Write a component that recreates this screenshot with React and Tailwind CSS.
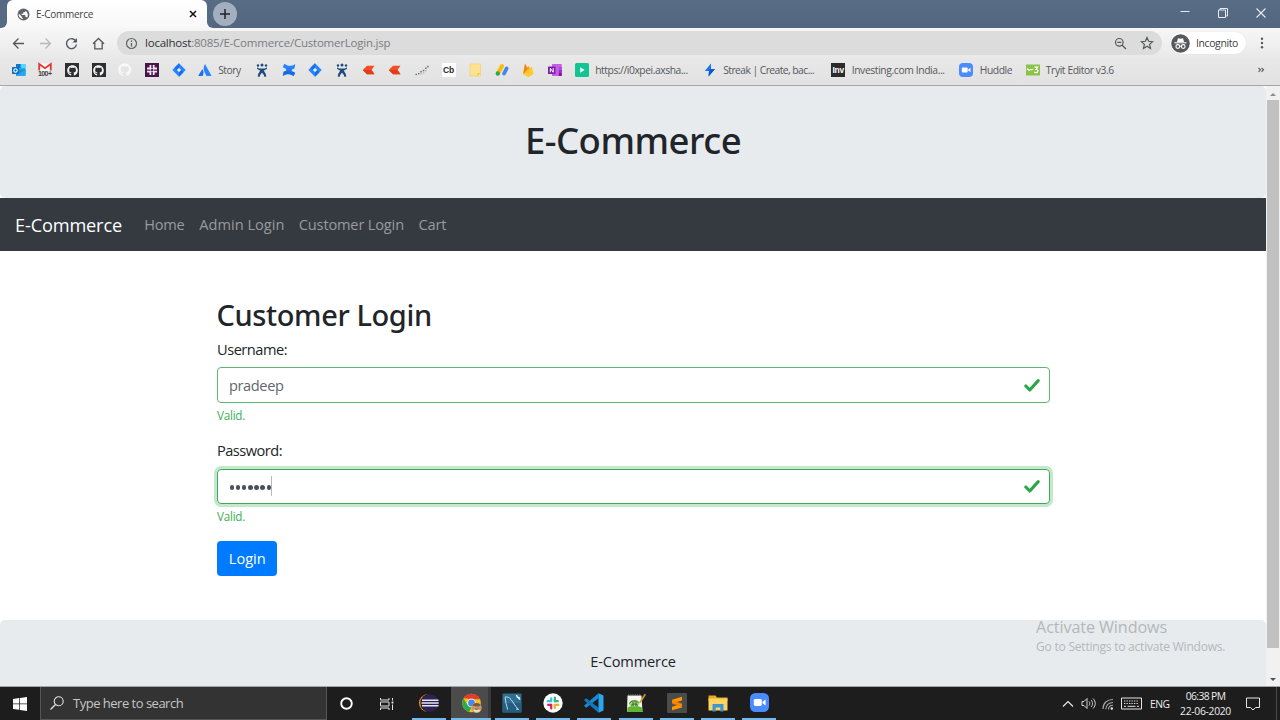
import React from "react";
import { FaGithub } from "react-icons/fa";

const Svg = ({ size = 14, box = 14, className = "", children }) => (
  <svg width={size} height={size} viewBox={`0 0 ${box} ${box}`} fill="none" className={`shrink-0 ${className}`}>
    {children}
  </svg>
);

const Globe = () => (
  <Svg size={13} box={24}>
    <path fill="#5f6368" d="M12 1a11 11 0 1 0 0 22 11 11 0 0 0 0-22Z" />
    <path fill="#fff" d="M3.2 10.2 9 16v1.200c0 1.100.9 2 2 2v1.700A9 9 0 0 1 3.200 10.200ZM18.500 18.100c-.3-.8-1-1.400-1.900-1.400h-1v-3c0-.6-.4-1-1-1h-6v-2h2c.6 0 1-.4 1-1V7.700h2c1.100 0 2-.9 2-2v-.4a9 9 0 0 1 2.900 12.800Z" />
  </Svg>
);

const Outlook = () => (
  <Svg>
    <rect x="4" y="1" width="9.500" height="8" rx=".6" fill="#28a8ea" />
    <rect x="4" y="1" width="4.800" height="4" fill="#0f78d4" />
    <rect x="8.800" y="1" width="4.700" height="4" fill="#50d9ff" />
    <path d="M4 6.500h9.500V12a1 1 0 0 1-1 1H5a1 1 0 0 1-1-1Z" fill="#1490df" />
    <path d="m4 12.500 9.500-6V12a1 1 0 0 1-1 1H5Z" fill="#28a8ea" />
    <rect x="0" y="4" width="7" height="7" rx=".6" fill="#0f6cbd" />
    <circle cx="3.500" cy="7.500" r="1.700" stroke="#fff" strokeWidth="1.100" />
  </Svg>
);

const Gmail = () => (
  <Svg className="overflow-visible">
    <rect x=".5" y=".5" width="13" height="7.500" fill="#f5f5f5" />
    <path d="M1.200 7.500V1L7 5.200 12.800 1v6.500" stroke="#e2382c" strokeWidth="1.800" />
    <text x="7" y="13.300" textAnchor="middle" fontSize="7" fontWeight="700" textLength="14" fontFamily="Liberation Sans, sans-serif" fill="#444">100+</text>
  </Svg>
);

const GithubTile = () => (
  <span className="flex size-3.5 shrink-0 items-center justify-center bg-[#2c2e30]">
    <FaGithub size={11} color="#f4f4f4" />
  </span>
);

const SlackTile = () => (
  <Svg>
    <rect width="14" height="14" fill="#4a154b" />
    <path d="M5.400 2v3.500H2M8.700 2v3.500M8.700 5.500H12M5.400 12V8.700M2 8.700h3.400M8.700 12V8.700H12" stroke="#f3e9f3" strokeWidth="1.800" />
    <path d="M5.600 4v6M8.500 4v6M4 5.600h6M4 8.500h6" stroke="#f3e9f3" strokeWidth=".7" />
  </Svg>
);

const Jira = () => (
  <Svg>
    <path d="M7 .3 13.700 7 7 13.700.3 7Z" fill="#2684ff" />
    <path d="M7 .3v4.600L4.900 7 2.500 4.800Z" fill="#1c6ee8" />
    <path d="m7 13.700V9.100L9.100 7l2.400 2.200Z" fill="#1c6ee8" />
    <path d="M7 4.900 9.100 7 7 9.100 4.900 7Z" fill="#eef4ff" />
  </Svg>
);

const Atlassian = () => (
  <Svg>
    <path d="M4.300 6.300C5.700 7.900 6 10.500 4.700 13H.9c-.4 0-.6-.4-.4-.7Z" fill="#1f6fe5" />
    <path d="M7 1c-1.800 3-1.700 5.500-.5 8l2 4h4.200c.5 0 .7-.4.500-.8Z" fill="#2684ff" />
  </Svg>
);

const JiraOld = () => (
  <Svg>
    <g fill="#1d4b7c">
      <circle cx="7" cy="1.900" r="1.500" />
      <circle cx="3" cy="2.500" r="1.200" />
      <circle cx="11" cy="2.500" r="1.200" />
      <path d="M2 4.200C3.500 5.400 5 5.600 7 5.600s3.500-.2 5-1.400l-.2 1.900c-1 .7-2 1-2.600 1.200-.3 1 .3 1.700 1 2.700.8 1.100 1 2.300.9 3.800H9.300c0-1.700-.9-2.800-2.300-4.100-1.400 1.300-2.300 2.400-2.300 4.100H2.900c-.1-1.500.1-2.700.9-3.800.7-1 1.300-1.700 1-2.700-.6-.2-1.600-.5-2.600-1.200Z" />
    </g>
  </Svg>
);

const Confluence = () => (
  <Svg>
    <path d="M.8 4.300 2.300.7C5.500 3 8.500 4 13.200.9L12.600 5.200C9 7.800 5 7 .8 4.300Z" fill="#2684ff" />
    <path d="M13.200 9.700 11.700 13.300C8.500 11 5.500 10 .8 13.100L1.400 8.800C5 6.200 9 7 13.200 9.700Z" fill="#1868e0" />
    <path d="M4 5.500h6L9.500 8.500h-5Z" fill="#2376ee" />
  </Svg>
);

const RedArrow = () => (
  <Svg>
    <path d="M.8 7 5 2.800h7.500L9.500 7l3 4.200H5Z" fill="#f04e23" />
    <path d="M.8 7h8.700l3 4.200H5Z" fill="#e23c1e" />
  </Svg>
);

const Dots = () => (
  <Svg>
    <g fill="#6b6b6b">
      <rect x=".5" y="10.800" width="1.500" height="1.300" /><rect x="3" y="10" width="1.500" height="1.300" />
      <rect x="5.300" y="8" width="1.500" height="1.500" /><rect x="5.500" y="10.500" width="1.200" height="1.200" opacity=".5" />
      <rect x="7.800" y="6.800" width="1.500" height="1.500" /><rect x="8" y="9.300" width="1.200" height="1.200" opacity=".5" />
      <rect x="10" y="4.500" width="1.500" height="1.500" /><rect x="10.200" y="7" width="1.200" height="1.200" opacity=".5" />
      <rect x="12.200" y="2.800" width="1.500" height="1.500" />
    </g>
  </Svg>
);

const Cb = () => (
  <span className="flex size-3.5 shrink-0 items-center justify-center bg-white font-['Liberation_Sans',sans-serif] text-[8.500px] font-bold leading-none text-[#2b2b2b]">Cb</span>
);

const Note = () => (
  <Svg>
    <path d="M2 1h10.500v12H2Z" fill="#fde293" />
    <path d="M2 1h10.500v12H2Z" stroke="#f6cf65" strokeWidth=".7" />
    <path d="M9.500 13v-3h3Z" fill="#f5c33b" />
  </Svg>
);

const Ads = () => (
  <Svg>
    <path d="M7 3 3 10.300" stroke="#fbbc04" strokeWidth="4" strokeLinecap="round" />
    <circle cx="2.800" cy="10.500" r="2.200" fill="#34a853" />
    <path d="m11.600 5.500-2.500 5" stroke="#4285f4" strokeWidth="3.800" strokeLinecap="round" />
  </Svg>
);

const Firebase = () => (
  <Svg>
    <path d="M2.200 11 4 .8 6.300 4.500 7.500 3l5 7.700L7.300 13.700Z" fill="#f9a01b" />
    <path d="m2.200 11 8.600-7.500 1.700 7.300-5.200 2.900Z" fill="#ffcb2d" />
    <path d="M2.200 11 4 .8l2.300 4.700Z" fill="#f6820d" />
  </Svg>
);

const OneNote = () => (
  <Svg>
    <rect x="4" y="1" width="9.800" height="12" rx=".6" fill="#c65fe6" />
    <rect x="10.800" y="4" width="3" height="3" fill="#ae4bd5" />
    <rect x="10.800" y="7" width="3" height="3" fill="#9332bf" />
    <rect x="10.800" y="10" width="3" height="3" fill="#7719aa" />
    <rect x="0" y="3.500" width="7.500" height="7.500" rx=".6" fill="#7b1fa8" />
    <path d="M2.300 9.300V5.200l2.900 4.100V5.200" stroke="#fff" strokeWidth="1" />
  </Svg>
);

const Play = () => (
  <Svg>
    <rect width="14" height="14" rx="1.500" fill="#10c494" />
    <path d="M5.200 4.300 9.600 7l-4.400 2.700Z" fill="#fff" />
  </Svg>
);

const Bolt = () => (
  <Svg>
    <path d="M8 .5 1.800 8H6L5.500 13.500 12 6H8Z" fill="#1a73e8" />
    <path d="M6 8 5.500 13.500 12 6H8Z" fill="#0b57d0" />
  </Svg>
);

const Inv = () => (
  <span className="flex size-3.5 shrink-0 items-center justify-center bg-[#2b2b2b] font-['Liberation_Sans',sans-serif] text-[8.500px] font-bold leading-none tracking-[-0.300px] text-white">Inv</span>
);

const Zoom = ({ size = 14 }) => (
  <Svg size={size}>
    <rect width="14" height="14" rx="4" fill="#4a8cff" />
    <rect x="2.800" y="4.500" width="5.900" height="5" rx="1.100" fill="#fff" />
    <path d="m9.200 6.500 2.300-1.700v4.400L9.200 7.500Z" fill="#fff" />
  </Svg>
);

const W3 = () => (
  <Svg>
    <rect y="1.500" width="14" height="11" fill="#8bc34a" />
    <path d="M1 6.500C2 4.500 2.500 8.500 3.800 7S5.500 8 7 6" stroke="#fff" strokeWidth="1.100" />
    <path d="M8.500 4.200h3.200L10 6.400c2.700 0 2.500 3.300 0 3.300-.9 0-1.500-.4-1.800-1" stroke="#fff" strokeWidth="1.200" />
  </Svg>
);

const label = "whitespace-nowrap text-[10.300px] leading-none text-[#55585c]";

const Bookmark = ({ className = "w-[26.64px]", text, track, children }) => (
  <div className={`flex shrink-0 items-center ${className}`}>
    {children}
    {text && <span className={`${label} ${track}`}>{text}</span>}
  </div>
);

const Check = () => (
  <svg width="16" height="18" viewBox="0 0 16 18" fill="none" className="shrink-0">
    <path d="M1.800 10 5.800 14 14.200 4.600" stroke="#28a745" strokeWidth="3.100" strokeLinecap="round" strokeLinejoin="round" />
  </svg>
);

const TitleBar = () => (
  <div className="flex h-7 shrink-0 bg-linear-to-b from-[#586c86] to-[#53667f]">
    <div className="flex w-[7px] items-end bg-[#fbfbfb]"><div className="h-full w-full rounded-br-[6px] bg-[#566a84]" /></div>
    <div className="flex w-[199.500px] items-center rounded-t-[6px] bg-linear-to-b from-white to-[#f8f8f8] pl-2.5 pr-[9px]">
      <Globe />
      <span className="ml-[6px] text-[10px] leading-none tracking-[-0.270px] text-[#404347]">E-Commerce</span>
      <Svg size={8} box={8} className="ml-auto mr-[1px]"><path d="m1 1 6 6M7 1 1 7" stroke="#111" strokeWidth="1.500" /></Svg>
    </div>
    <div className="w-1.5 bg-[#f8f8f8]"><div className="h-full w-full rounded-bl-[6px] bg-[#566a84]" /></div>
    <div className="flex size-6 items-center justify-center self-center rounded-full bg-[#a3afbf]">
      <Svg size={10} box={10}><path d="M5 0v10M0 5h10" stroke="#1f2328" strokeWidth="1.500" /></Svg>
    </div>
    <div className="ml-auto flex w-[100px] items-start justify-between pr-[14.500px] pt-2 text-white">
      <Svg size={10} box={10}><path d="M.5 3.500h9" stroke="#e6ebf1" /></Svg>
      <Svg size={10} box={10}><path d="M.5 2h7v7.500h-7ZM2 2V.5h7.500V8H7.500" stroke="#e6ebf1" /></Svg>
      <Svg size={10} box={10}><path d="m.5.5 9 9M9.500.5l-9 9" stroke="#e6ebf1" strokeWidth="1.100" /></Svg>
    </div>
  </div>
);

const Toolbar = () => (
  <div className="flex h-[30px] shrink-0 items-center bg-linear-to-b from-[#f7f7f7] to-[#e9e9e9] pl-[11.500px]">
    <Svg size={13} box={13}><path d="M12 6.500H1.500M6.500 1.500l-5 5 5 5" stroke="#55585c" strokeWidth="1.300" /></Svg>
    <Svg size={13} box={13} className="ml-3.5"><path d="M1 6.500h10.500M6.500 1.500l5 5-5 5" stroke="#b7b9bb" strokeWidth="1.300" /></Svg>
    <Svg size={13} box={13} className="ml-[13.500px]"><path d="M11 4.300A5 5 0 1 0 11.500 7.500" stroke="#55585c" strokeWidth="1.400" /><path d="M12 1v4.500H7.500Z" fill="#55585c" /></Svg>
    <Svg size={13} box={13} className="ml-[13.500px]"><path d="M1 6.800 6.500 1.500 12 6.800M2.800 5.500v6.300h7.400V5.500" stroke="#55585c" strokeWidth="1.300" /></Svg>
    <div className="mt-[3px] ml-[12.500px] flex h-6 w-[1045px] shrink-0 items-center self-start rounded-full bg-[#dcdcdc] pl-2">
      <Svg size={13} box={13}><circle cx="6.500" cy="6.500" r="5" stroke="#5f6368" strokeWidth="1.200" /><path d="M6.500 6v3.500M6.500 3.600v1.300" stroke="#5f6368" strokeWidth="1.300" /></Svg>
      <span className="whitespace-nowrap pl-[7px] text-[11.500px] leading-none tracking-[-0.220px] text-[#7a7d81]"><span className="text-[#2f3236]">localhost</span>:8085/E-Commerce/CustomerLogin.jsp</span>
      <Svg size={13} box={13} className="ml-auto"><circle cx="5.300" cy="5.300" r="3.800" stroke="#55585c" strokeWidth="1.200" /><path d="m8 8 4 4M3.300 5.300h4" stroke="#55585c" strokeWidth="1.300" /></Svg>
      <Svg size={14} box={14} className="ml-[13px] mr-[8.500px]"><path d="m7 1.600 1.600 3.700 4 .4-3 2.700.9 4L7 10.300l-3.500 2.100.9-4-3-2.700 4-.4Z" stroke="#55585c" strokeWidth="1.200" /></Svg>
    </div>
    <div className="ml-[7.500px] flex h-[22px] w-[76px] shrink-0 items-center rounded-full bg-white pl-[1.500px] shadow-[0_0_1px_rgba(0,0,0,0.15)]">
      <Svg size={19} box={19}>
        <circle cx="9.500" cy="9.500" r="9.300" fill="#55585c" />
        <path d="M6 8 7 4.300l2.500.5 2.500-.5L13 8Z" fill="#fff" />
        <path d="M3.500 8.800h12" stroke="#fff" strokeWidth="1.100" />
        <circle cx="6.800" cy="12.500" r="1.900" stroke="#fff" strokeWidth="1.100" /><circle cx="12.200" cy="12.500" r="1.900" stroke="#fff" strokeWidth="1.100" />
        <path d="M8.500 12.200h2" stroke="#fff" />
      </Svg>
      <span className="ml-[6px] text-[10.500px] leading-none tracking-[-0.400px] text-[#3c4043]">Incognito</span>
    </div>
    <Svg size={14} box={14} className="ml-[9px]"><g fill="#55585c"><circle cx="7" cy="2.800" r="1.200" /><circle cx="7" cy="7" r="1.200" /><circle cx="7" cy="11.200" r="1.200" /></g></Svg>
  </div>
);

const Bookmarks = () => (
  <div className="flex h-7 shrink-0 items-center border-b border-[#a4a6a8] bg-linear-to-b from-[#e8e8e8] to-[#e2e2e2] pb-[3px] pl-[11.800px] pr-[15px]">
    <Bookmark><Outlook /></Bookmark>
    <Bookmark><Gmail /></Bookmark>
    <Bookmark><GithubTile /></Bookmark>
    <Bookmark><GithubTile /></Bookmark>
    <Bookmark><FaGithub size={13.5} color="#f8f8f8" /></Bookmark>
    <Bookmark><SlackTile /></Bookmark>
    <Bookmark><Jira /></Bookmark>
    <Bookmark className="w-[57px] gap-1.5" text="Story" track="tracking-[-0.450px]"><Atlassian /></Bookmark>
    <Bookmark><JiraOld /></Bookmark>
    <Bookmark><Confluence /></Bookmark>
    <Bookmark><Jira /></Bookmark>
    <Bookmark><JiraOld /></Bookmark>
    <Bookmark><RedArrow /></Bookmark>
    <Bookmark><RedArrow /></Bookmark>
    <Bookmark><Dots /></Bookmark>
    <Bookmark><Cb /></Bookmark>
    <Bookmark><Note /></Bookmark>
    <Bookmark><Ads /></Bookmark>
    <Bookmark><Firebase /></Bookmark>
    <Bookmark><OneNote /></Bookmark>
    <Bookmark className="w-[128px] gap-[6.500px]" text="https://i0xpei.axsha..." track="tracking-[-0.438px]"><Play /></Bookmark>
    <Bookmark className="w-[128.500px] gap-[6.500px]" text="Streak | Create, bac..." track="tracking-[-0.544px]"><Bolt /></Bookmark>
    <Bookmark className="w-[128.200px] gap-[6.500px]" text="Investing.com India..." track="tracking-[-0.371px]"><Inv /></Bookmark>
    <Bookmark className="w-[66.500px] gap-[6.500px]" text="Huddle" track="tracking-[-0.460px]"><Zoom /></Bookmark>
    <Bookmark className="w-[90px] gap-1.5" text="Tryit Editor v3.6" track="tracking-[-0.411px]"><W3 /></Bookmark>
    <Svg size={8} box={8} className="ml-auto"><path d="m1.500 1.800 2 2-2 2M4.500 1.800l2 2-2 2" stroke="#55585c" strokeWidth="1.100" /></Svg>
  </div>
);

const Page = () => (
  <div className="flex min-w-0 flex-1 flex-col bg-white text-[14.600px] text-[#212529]">
    <header className="flex h-28 shrink-0 items-center justify-center rounded-[5px] bg-[#e8ebee] pb-[3px]">
      <h1 className="font-['Noto_Sans','Open_Sans',sans-serif] text-[36.500px] font-medium leading-none tracking-[-0.500px]">E-Commerce</h1>
    </header>
    <nav className="flex h-[53px] shrink-0 items-center bg-[#343a40] pl-[15px] leading-none text-[#989b9e]">
      <span className="w-[129.300px] pt-px text-[18.200px] tracking-[-0.160px] text-white">E-Commerce</span>
      <span className="w-[55px] tracking-[-0.250px]">Home</span>
      <span className="w-[99.500px] whitespace-nowrap">Admin Login</span>
      <span className="w-[119.700px] whitespace-nowrap tracking-[-0.170px]">Customer Login</span>
      <span className="tracking-[-0.200px]">Cart</span>
    </nav>
    <form className="mx-auto mt-[46px] flex h-[323px] w-[833px] shrink-0 flex-col items-start">
      <h2 className="h-[40.500px] font-['Noto_Sans','Open_Sans',sans-serif] text-[29px] font-medium leading-[35px] tracking-[-0.390px]">Customer Login</h2>
      <label className="h-[29px] pl-[0.500px] pt-px leading-[20px] tracking-[-0.480px]">Username:</label>
      <div className="flex h-9 w-full items-center justify-between rounded-[4px] border border-[#5cb572] pl-[11.500px] pr-[9px] text-[#5f666d]">
        <span className="pt-0.5 tracking-[-0.390px]">pradeep</span>
        <Check />
      </div>
      <p className="mt-[2.500px] h-[34.500px] pl-[0.500px] text-[11.700px] leading-[20px] tracking-[-0.260px] text-[#3fae58]">Valid.</p>
      <label className="h-[29px] pl-[0.500px] leading-[20px] tracking-[-0.510px]">Password:</label>
      <div className="flex h-[35px] w-full items-center justify-between rounded-[4px] border border-[#3fa958] pl-[12.500px] pr-[9px] shadow-[0_0_0_3px_#c5e8cd]">
        <span className="flex h-5 items-center border-r border-[#b5b8bb] pt-[3px]">
          <span className="flex gap-[1.800px]">
            {Array.from({ length: 7 }, (_, i) => <span key={i} className="size-[4.300px] rounded-full bg-[#495057]" />)}
          </span>
        </span>
        <Check />
      </div>
      <p className="mt-[2.500px] h-[35px] pl-[0.500px] text-[11.700px] leading-[20px] tracking-[-0.260px] text-[#3fae58]">Valid.</p>
      <button type="button" className="flex h-[34.500px] w-[60.500px] items-center justify-center rounded-[4px] bg-[#007bff] pl-px leading-none text-white">Login</button>
    </form>
    <footer className="flex min-h-0 flex-1 justify-center rounded-t-[5px] bg-[#e8ebee] pt-[31px] leading-[20px] tracking-[-0.160px]">E-Commerce</footer>
  </div>
);

const Scrollbar = () => (
  <div className="flex w-3.5 shrink-0 flex-col items-center justify-between bg-[#f1f1f1] pb-[3px] pt-[5px]">
    <Svg size={6} box={6}><path d="m0 5 3-3 3 3Z" fill="#8c8c8c" /></Svg>
    <div className="mb-[29px] mt-[3px] w-[11.500px] flex-1 bg-[#c1c1c1]" />
    <Svg size={6} box={6}><path d="m0 1 3 3 3-3Z" fill="#505050" /></Svg>
  </div>
);

const Eclipse = () => (
  <Svg size={20} box={20}>
    <circle cx="9" cy="10" r="9" fill="#f7941e" />
    <circle cx="10.600" cy="10" r="9.300" fill="#1d1d1d" />
    <circle cx="11" cy="10" r="8.700" fill="#2c2255" />
    <path d="M3 7.200h16.500M2.500 10h17.200M3 12.800h16.500" stroke="#e9e6f3" strokeWidth="1.500" />
  </Svg>
);

const Chrome = () => (
  <Svg size={20} box={20}>
    <circle cx="9.500" cy="10" r="9.300" fill="#fbc116" />
    <path d="M1.500 5.300A9.300 9.300 0 0 1 18 6.300H9.500Z" fill="#e33b2e" />
    <path d="M1.500 5.300 5.500 12l4 2.300-2.300 4.700A9.300 9.300 0 0 1 1.500 5.300Z" fill="#2da94f" />
    <circle cx="9.500" cy="10" r="4.400" fill="#f1f1f1" /><circle cx="9.500" cy="10" r="3.400" fill="#4587f3" />
    <circle cx="14.500" cy="14.700" r="5.200" fill="#c99b6b" />
    <path d="M10.200 12.500c1.500-3 6.500-3.500 8.500 0l-2 1-4-.3Z" fill="#7a5a3c" />
    <path d="M11 17c1 2 5 3.500 7.500.5l-3-1.500Z" fill="#e8dccb" />
    <path d="M13 15.500c1 1 2.500 1 3.500 0" stroke="#6d4a2f" />
  </Svg>
);

const MySql = () => (
  <Svg size={20} box={20}>
    <rect x=".5" y=".5" width="19" height="19" rx="1" fill="#2f6f94" />
    <rect x=".5" y="10" width="19" height="9.500" fill="#255d80" />
    <path d="M5.500 16.500C5 13 4 11 3.700 8.500 3.500 6.500 3 5 3.300 4c2-.5 4 .5 5.700 2.500 2.500 3 3.500 6 7.500 10l-2.500-.5" stroke="#c9dde8" strokeWidth="1" />
    <path d="m14.500 2 1 2.300 2.300.7M16 4.500l2 2" stroke="#e8f1f6" strokeWidth="1.500" />
  </Svg>
);

const Slack = () => (
  <Svg size={20} box={20}>
    <circle cx="10" cy="10" r="9.700" fill="#fff" />
    <g strokeWidth="2.500" strokeLinecap="round">
      <path d="M8.300 5.500v2.800M4.800 8.300h3.500" stroke="#36c5f0" />
      <path d="M11.700 4.800v3.500M11.700 8.300h3" stroke="#2eb67d" />
      <path d="M11.700 11.700h3.500M11.700 11.700v3" stroke="#ecb22e" />
      <path d="M8.300 11.700v3.500M5.300 11.700h3" stroke="#e01e5a" />
    </g>
    <path d="M10 4v12M4 10h12" stroke="#fff" strokeWidth=".8" />
  </Svg>
);

const VsCode = () => (
  <Svg size={20} box={20}>
    <path d="M14.500.3v5L2.200 14.800.3 13.300v-.8Z" fill="#1a8ad4" />
    <path d="M14.500 19.700v-5L2.200 5.200.3 6.700v.8Z" fill="#1279c0" />
    <path d="M14.500.3 19.500 2.600v14.800l-5 2.300Z" fill="#2aa5f0" />
  </Svg>
);

const NotepadPP = () => (
  <Svg size={20} box={20}>
    <path d="M1.500 2.500h14l1 16.500H1Z" fill="#f4f6f2" />
    <path d="M2 2.300h13" stroke="#8b8b8b" strokeWidth="1.600" strokeDasharray="1.200 1" />
    <path d="M1.500 14.500c4-2.500 9-2.500 14.600 0l.3 4.500H1.100Z" fill="#62b533" />
    <path d="M3 10c1.500-3.500 7-4.500 10-1.500 1.500 2 0 4.500-4 5-3.500.2-6.500-.8-6-3.500Z" fill="#a5d67f" />
    <path d="M3.500 10.500c1.500-3 6.500-3.500 9-.8M5 12.500c2-2 5-2 7 0M7 9v4M10 9v4" stroke="#2f6a1d" strokeWidth="1" />
    <path d="m19.300 1.300-5.500 8.500" stroke="#d59a2d" strokeWidth="1.600" />
  </Svg>
);

const Sublime = () => (
  <Svg size={20} box={20}>
    <rect width="20" height="20" rx="1" fill="#4b4b4b" />
    <path d="M15 3.800v3.600L9.200 9.300 15 11.100v3.500L5 17.300v-3.600l5.500-1.800L5 10V6.700Z" fill="#ff9800" />
    <path d="M5 6.700 15 10.300v4.300L5 11Z" fill="#f57c00" opacity=".6" />
  </Svg>
);

const Folder = () => (
  <Svg size={20} box={20}>
    <path d="M.5 2.500h7l1.500 2h10.500v3H.5Z" fill="#e9a924" />
    <rect x=".5" y="5.500" width="19" height="12" fill="#fcd462" />
    <path d="M4.500 18.500V11h11v7.500h-3.200v-4H7.700v4Z" fill="#3f95cf" />
  </Svg>
);

const Task = ({ children }) => (
  <div className="flex h-full w-[41.300px] shrink-0 flex-col items-center justify-between pt-1.5">
    {children}
    <div className="h-0.5 w-[34px] bg-[#76b9ed]" />
  </div>
);

const Taskbar = () => (
  <div className="flex h-[34px] shrink-0 items-center border-t border-[#a3a5a7] bg-[#1d1d1d] text-[#ededed]">
    <div className="flex w-10 justify-center">
      <Svg size={14} box={14}><path d="M0 2l6.300-.9v5.500H0ZM7 1l7-1v6.600H7ZM0 7.300h6.300v5.500L0 12ZM7 7.300h7V14l-7-1Z" fill="#fff" /></Svg>
    </div>
    <div className="flex h-full w-[287px] items-center border border-t-0 border-[#565656] bg-[#333] pl-[9px]">
      <Svg size={14} box={14}><circle cx="8.700" cy="5.300" r="4.500" stroke="#e2e2e2" strokeWidth="1.100" /><path d="m5.500 8.500-5 5" stroke="#e2e2e2" strokeWidth="1.200" /></Svg>
      <span className="ml-[9px] pt-px text-[13px] leading-none tracking-[-0.500px] text-[#c6c6c6]">Type here to search</span>
    </div>
    <div className="flex w-10 justify-center pr-px"><Svg size={13} box={13}><circle cx="6.500" cy="6.500" r="5.300" stroke="#fff" strokeWidth="1.900" /></Svg></div>
    <div className="flex w-[41px] justify-center pr-px">
      <Svg size={14} box={14}><path d="M.5 1v2h8.500V1M.5 13v-2h8.500v2M.5 5h8.500v4H.5ZM12.500 1v2.500M12.500 7.500V13" stroke="#e6e6e6" /><path d="M11.600 4.500h1.800v2h-1.800Z" fill="#e6e6e6" /></Svg>
    </div>
    <div className="flex h-full w-[43px] shrink-0 flex-col items-center justify-between pr-px pt-1.5"><Eclipse /><div className="h-0.5 w-[34px] bg-[#76b9ed]" /></div>
    <div className="flex h-full w-10 shrink-0 flex-col items-center justify-between border-r-[3px] border-[#3a3a3a] bg-[#4b4b4b] pt-1.5">
      <div className="flex pl-1"><Chrome /></div><div className="-mr-[3px] h-0.5 w-10 bg-[#76b9ed]" />
    </div>
    <Task><MySql /></Task>
    <Task><Slack /></Task>
    <Task><VsCode /></Task>
    <Task><NotepadPP /></Task>
    <Task><Sublime /></Task>
    <Task><Folder /></Task>
    <Task><Zoom size={19} /></Task>
    <div className="ml-auto flex h-full shrink-0 items-center leading-none">
      <Svg size={12} box={12}><path d="m1 8.500 5-5 5 5" stroke="#eee" strokeWidth="1.100" /></Svg>
      <Svg size={15} box={15} className="ml-[6.500px]"><path d="M1 5.500h2L6 2.500v10l-3-3H1ZM8 5.500c1 1.200 1 2.800 0 4M10 4c2 2 2 5 0 7M12 2.500c3 3 3 7 0 10" stroke="#e6e6e6" strokeWidth=".9" /></Svg>
      <Svg size={12} box={12} className="ml-[6px]"><path d="M1 11C1 5 5 1.500 11 1.500M3.800 11.300c0-4 3-6.800 7.200-6.800M6.500 11.500c0-2.500 2-4.200 4.500-4.200" stroke="#aaa" strokeWidth="1.100" /><circle cx="9.800" cy="10.500" r="1.200" fill="#eee" /></Svg>
      <Svg size={21} box={21} className="ml-[7.500px]"><path d="M.5 5h20v11H.5Z" stroke="#e6e6e6" /><path d="M3 8h15M3 10.500h15" stroke="#e6e6e6" strokeDasharray="1.300 1.200" /><path d="M3 13.300h2M6.500 13.300h8M16 13.300h2" stroke="#e6e6e6" /></Svg>
      <span className="ml-2 w-[30px] pt-px text-[10.300px] tracking-[-0.500px]">ENG</span>
      <div className="flex w-[51px] flex-col items-center gap-[5px] whitespace-nowrap text-[10.300px]">
        <span className="tracking-[-0.600px]">06:38 PM</span>
        <span className="tracking-[-0.280px]">22-06-2020</span>
      </div>
      <Svg size={14} box={14} className="ml-[15px]"><path d="M.5 1h13v9.500H9.500L7 13l-2.500-2.500h-4Z" stroke="#e6e6e6" /></Svg>
      <div className="ml-4 mr-[3px] h-full w-px bg-[#4a4a4a]" />
    </div>
  </div>
);

export default function App() {
  return (
    <div className="relative flex h-[720px] w-[1280px] flex-col overflow-hidden font-['Open_Sans','Noto_Sans',sans-serif]">
      <TitleBar />
      <Toolbar />
      <Bookmarks />
      <div className="flex min-h-0 flex-1 bg-white">
        <Page />
        <Scrollbar />
      </div>
      <Taskbar />
      <div className="pointer-events-none absolute left-[1036px] top-[617px] whitespace-nowrap text-[#b4b7ba]">
        <p className="text-[16.200px] leading-[20px] tracking-[-0.110px]">Activate Windows</p>
        <p className="text-[12px] leading-[19px] tracking-[-0.210px]">Go to Settings to activate Windows.</p>
      </div>
    </div>
  );
}
